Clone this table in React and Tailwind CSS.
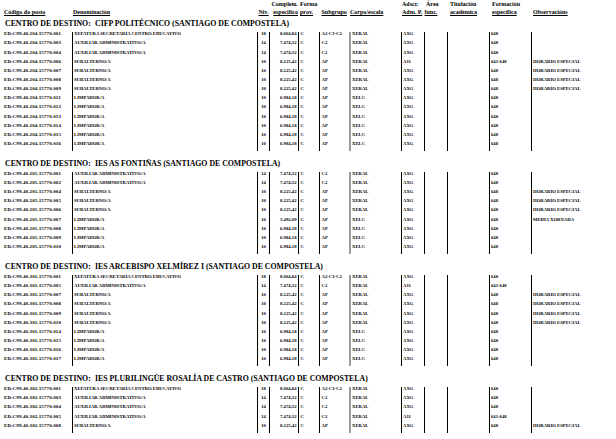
import React from "react";

const XEF = "XEFATURA SECRETARÍA CENTRO EDUCATIVO";
const AUX = "AUXILIAR ADMINISTRATIVO/A";
const SUB = "SUBALTERNO/A";
const LIM = "LIMPADOR/A";
const HE = "HORARIO ESPECIAL";

const xef = (n) => ({ n, d: XEF, niv: "18", c: "8.004,84", s: "A2-C1-C2", corpo: "XERAL", a: "AXG", f: "648", o: "" });
const aux = (n, a = "AXG", f = "648") => ({ n, d: AUX, niv: "14", c: "7.474,32", s: "C2", corpo: "XERAL", a, f, o: "" });
const sub = (n, a = "AXG", f = "648") => ({ n, d: SUB, niv: "10", c: "8.225,42", s: "AP", corpo: "XERAL", a, f, o: HE });
const lim = (n) => ({ n, d: LIM, niv: "10", c: "6.984,18", s: "AP", corpo: "XELC", a: "AXG", f: "648", o: "" });

const centros = [
  {
    nome: "CIFP POLITÉCNICO (SANTIAGO DE COMPOSTELA)",
    prefix: "ED.C99.40.204.15770.",
    rows: [
      xef("001"),
      aux("003"),
      aux("004"),
      sub("006", "A11", "641-648"),
      sub("007"),
      sub("008"),
      sub("009"),
      lim("011"),
      lim("012"),
      lim("013"),
      lim("014"),
      lim("015"),
      lim("016"),
    ],
  },
  {
    nome: "IES AS FONTIÑAS (SANTIAGO DE COMPOSTELA)",
    prefix: "ED.C99.40.205.15770.",
    rows: [
      aux("001"),
      aux("002"),
      sub("004"),
      sub("005"),
      sub("006"),
      { ...lim("007"), c: "3.492,09", o: "MEDIA XORNADA" },
      lim("008"),
      lim("009"),
      lim("010"),
    ],
  },
  {
    nome: "IES ARCEBISPO XELMÍREZ I (SANTIAGO DE COMPOSTELA)",
    prefix: "ED.C99.40.301.15770.",
    rows: [
      xef("001"),
      aux("005", "A11", "641-648"),
      sub("007"),
      sub("008"),
      sub("009"),
      sub("010"),
      lim("014"),
      lim("015"),
      lim("016"),
      lim("017"),
    ],
  },
  {
    nome: "IES PLURILINGÜE ROSALÍA DE CASTRO (SANTIAGO DE COMPOSTELA)",
    prefix: "ED.C99.40.302.15770.",
    rows: [
      xef("001"),
      aux("003"),
      aux("004"),
      aux("005", "A11", "641-648"),
      sub("008"),
    ],
  },
];

function Row({ r, prefix }) {
  return (
    <div className="flex h-[9.15px] whitespace-nowrap text-[4.7px] leading-[4.6px]">
      <div className="w-[72px] shrink-0 pl-[4px] text-[5px] tracking-[0.12px]">
        {prefix}
        {r.n}
      </div>
      <div className="w-[185px] shrink-0 border-l border-black pl-[1px]">{r.d}</div>
      <div className="w-[12px] shrink-0 border-l border-black text-center">{r.niv}</div>
      <div className="w-[29px] shrink-0 border-l border-black pr-[1.5px] text-right">{r.c}</div>
      <div className="w-[21px] shrink-0 border-l border-black pl-[1.5px]">C</div>
      <div className="w-[30px] shrink-0 border-l border-black pl-[1.5px]">{r.s}</div>
      <div className="w-[52px] shrink-0 border-l-2 border-[#9a9a9a] pl-[1px]">{r.corpo}</div>
      <div className="w-[23px] shrink-0 border-l border-black pl-[1px]">{r.a}</div>
      <div className="w-[23px] shrink-0 border-l border-black"></div>
      <div className="w-[42px] shrink-0 border-l border-black"></div>
      <div className="w-[42px] shrink-0 border-l border-black pl-[1px]">{r.f}</div>
      <div className="flex-1 border-l border-black pl-[1px]">{r.o}</div>
    </div>
  );
}

function Centro({ centro, first }) {
  return (
    <section className={first ? "mt-[4px]" : "mt-[8.5px]"}>
      <h2 className="flex h-[8px] items-center whitespace-nowrap pl-[5px] text-[7.8px] leading-[8px]">
        <span className="w-[90px] shrink-0">CENTRO DE DESTINO:</span>
        <span>{centro.nome}</span>
      </h2>
      <div className="mt-[4.3px]">
        {centro.rows.map((r) => (
          <Row key={r.n} r={r} prefix={centro.prefix} />
        ))}
      </div>
    </section>
  );
}

export default function App() {
  return (
    <div className="h-[439px] w-[616px] overflow-hidden bg-white font-['Liberation_Serif',serif] font-bold text-black">
      {/* Cabeceira */}
      <div className="whitespace-nowrap text-[6px] leading-[8px]">
        <div className="flex h-[8px]">
          <div className="w-[269px] shrink-0"></div>
          <div className="w-[29px] shrink-0 text-right">Complem.</div>
          <div className="w-[21px] shrink-0 pl-[2px]">Forma</div>
          <div className="w-[82px] shrink-0"></div>
          <div className="w-[23px] shrink-0 pl-[1px]">Adscr.</div>
          <div className="w-[23px] shrink-0 pl-[2px]">Área</div>
          <div className="w-[42px] shrink-0 pl-[3px]">Titulación</div>
          <div className="w-[42px] shrink-0 pl-[3px]">Formación</div>
        </div>
        <div className="flex h-[8px] underline">
          <div className="w-[72px] shrink-0 pl-[4px]">Código do posto</div>
          <div className="w-[185px] shrink-0 pl-[1px]">Denominación</div>
          <div className="w-[12px] shrink-0 pl-[1.5px]">Niv.</div>
          <div className="w-[29px] shrink-0 text-right">específico</div>
          <div className="w-[21px] shrink-0 pl-[2px]">prov.</div>
          <div className="w-[30px] shrink-0 pl-[2.5px]">Subgrupo</div>
          <div className="w-[52px] shrink-0 pl-[1px]">Corpo/escala</div>
          <div className="w-[23px] shrink-0 pl-[1px]">Adm. P.</div>
          <div className="w-[23px] shrink-0 pl-[0.5px]">func.</div>
          <div className="w-[42px] shrink-0 pl-[3px]">académica</div>
          <div className="w-[42px] shrink-0 pl-[3px]">específica</div>
          <div className="flex-1 pl-[2px]">Observacións</div>
        </div>
      </div>

      {centros.map((c, i) => (
        <Centro key={c.prefix} centro={c} first={i === 0} />
      ))}
    </div>
  );
}
